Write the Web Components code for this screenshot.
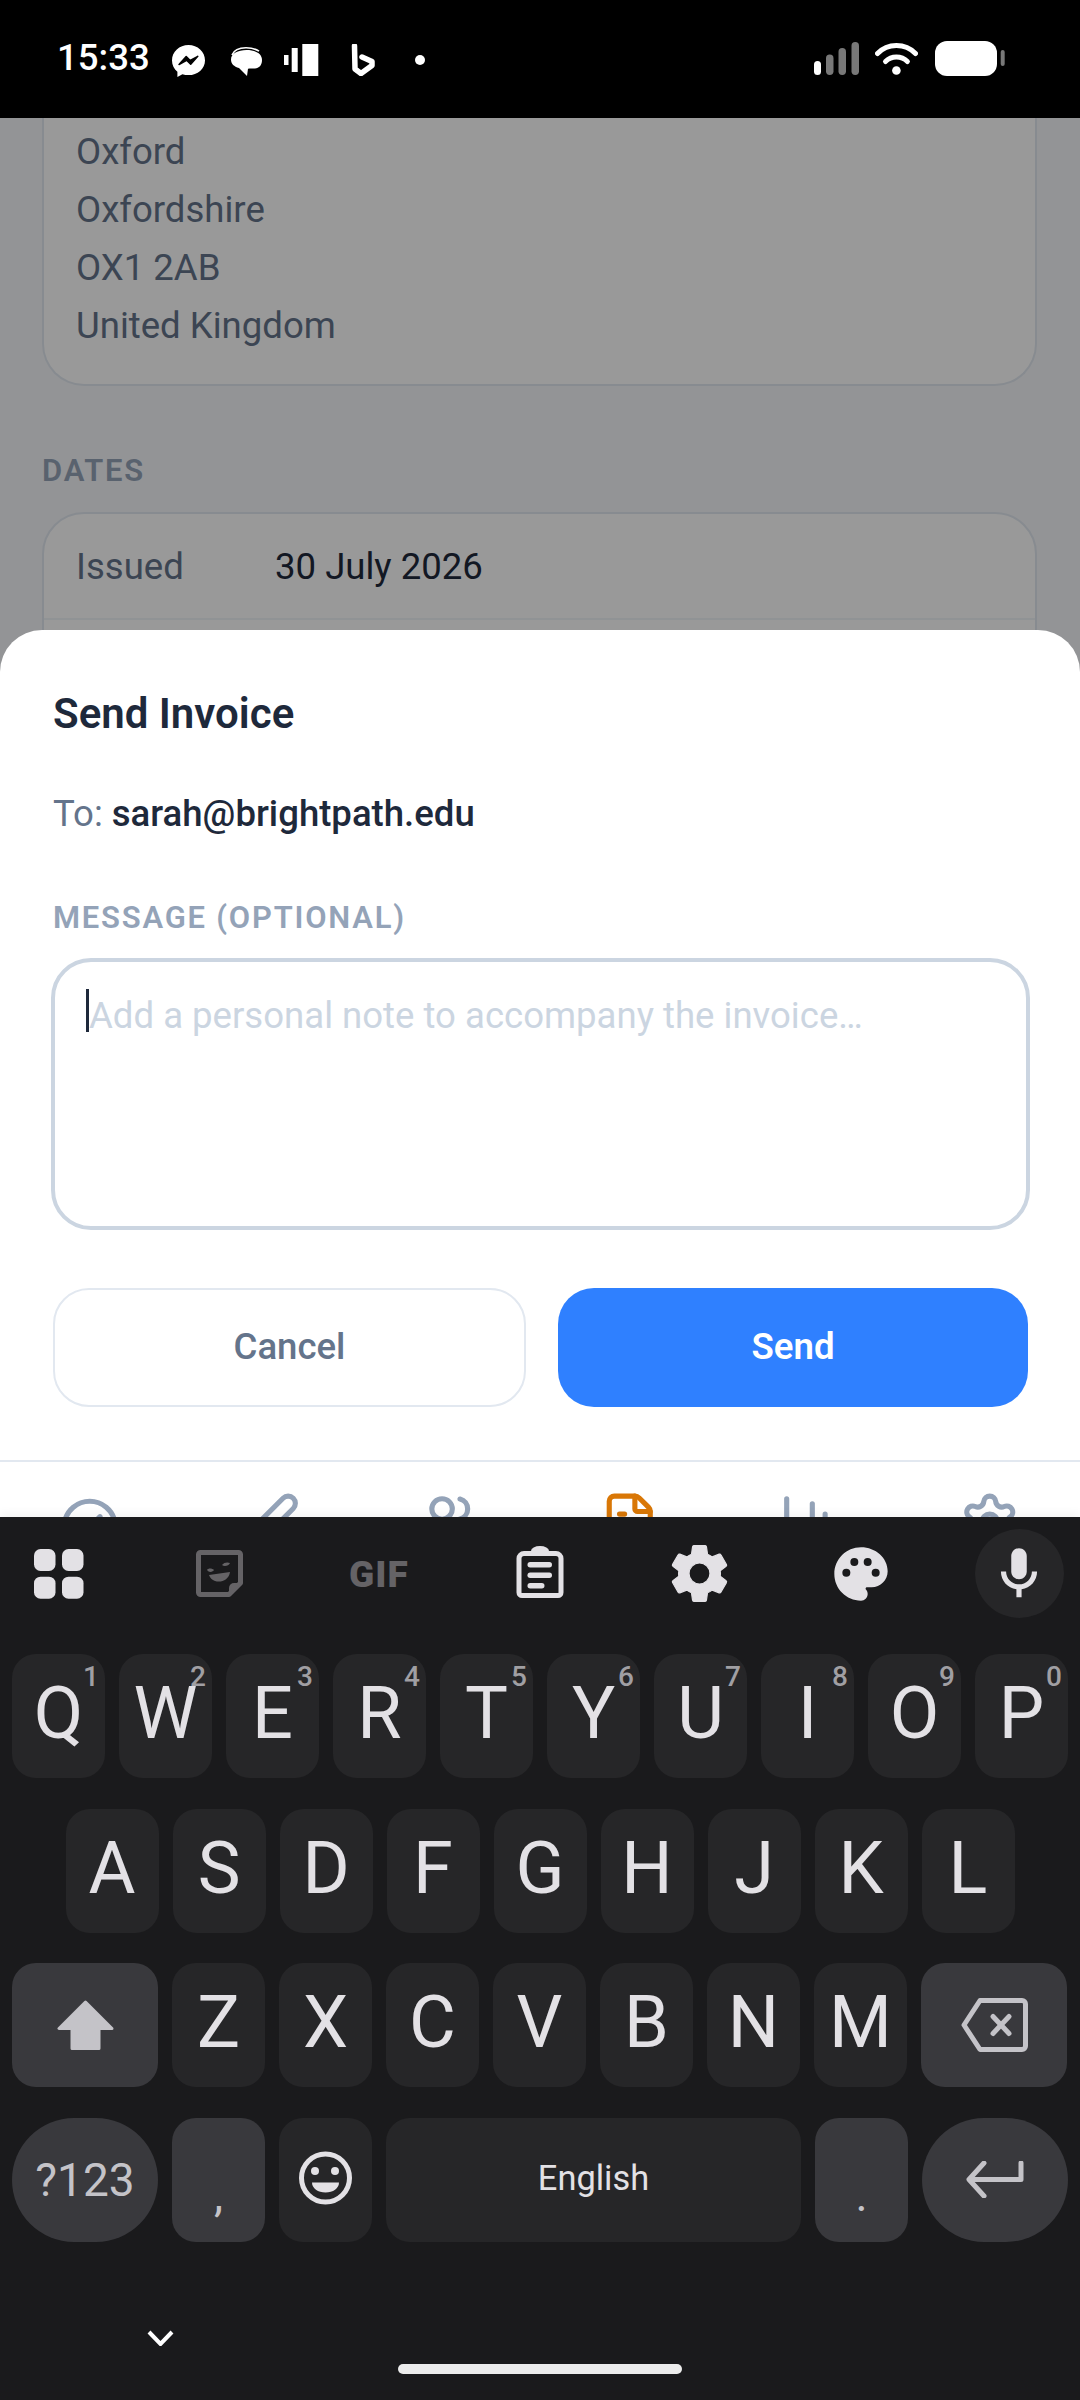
<!DOCTYPE html>
<html lang="en"><head><meta charset="utf-8"><title>Send Invoice</title>
<style>
html,body{margin:0;padding:0;background:#000}
body{width:1080px;height:2400px;overflow:hidden;font-family:Roboto,"Liberation Sans",sans-serif}
phone-app{width:1080px;height:2400px}
</style></head><body>
<phone-app></phone-app>

<template id="t-status-bar"><style>
:host{display:flex;height:118px;background:#000;color:#fff;box-sizing:border-box;position:relative;flex:none;padding:0 75px 0 57px;justify-content:space-between;align-items:flex-start}
.l,.r{display:flex;align-items:flex-start}
.time{font-size:36.560px;font-weight:500;line-height:42px;margin-top:37px;width:91px;white-space:nowrap}
svg{display:block;fill:#fff}
</style>
<div class="l"><span class="time">15:33</span>
<svg style="margin:45px 0 0 24px" width="33" height="32" viewBox="0 0 33 32"><path d="M16.500 0C7.400 0 0 6.800 0 15.400c0 4.600 2 8.600 5.400 11.300V32l5-2.800c1.900.6 4 .9 6.100.9C25.600 30.100 33 23.700 33 15.400 33 6.800 25.600 0 16.500 0z"/><path d="M7 19.500l7.200-8 4 4 7.600-4.200-7.100 8-4.100-4z" fill="#000" stroke="#000" stroke-width="1.500" stroke-linejoin="round"/></svg>
<svg style="margin:47px 0 0 26px" width="31" height="29" viewBox="0 0 31 29"><path d="M1 8C3 3 8 .8 15 .8s10 1.200 13 3.400" fill="none" stroke="#fff" stroke-width="1.600"/><path d="M15.500 3C24 3 31 6.500 31 13c0 5.500-3 8-7 8.500-2 .2-5 0-7 .2L16 29 8 21C3 19.500 0 17 0 12.500 0 6.500 7 3 15.500 3z"/></svg>
<svg style="margin:44px 0 0 22px" width="35" height="32" viewBox="0 0 35 32"><rect x="0" y="11" width="4.500" height="10"/><rect x="7.700" y="4" width="6" height="24"/><rect x="18.300" y="0" width="16" height="32"/></svg>
<svg style="margin:44px 0 0 32px" width="24" height="32" viewBox="0 0 24 32"><path d="M3.500 2L4 25l6 4.500 11-8v-4L11 13" fill="none" stroke="#fff" stroke-width="5.500" stroke-linejoin="round" stroke-linecap="round"/></svg>
<svg style="margin:55px 0 0 40px" width="10" height="10" viewBox="0 0 10 10"><circle cx="5" cy="5" r="5"/></svg>
</div>
<div class="r">
<svg style="margin:42px 0 0 0" width="45" height="34" viewBox="0 0 45 34"><rect x="0" y="19" width="7" height="14" rx="3.500"/><g fill="#787878"><rect x="12" y="12.500" width="7.500" height="20.500" rx="3.700"/><rect x="24.500" y="6" width="7.500" height="27" rx="3.700"/><rect x="37.500" y="0" width="7.500" height="33" rx="3.700"/></g></svg>
<svg style="margin:43px 0 0 16px" width="43" height="32" viewBox="0 0 43 32"><path d="M2.500 10.500C7.500 5.300 14 2.500 21.400 2.500S35.500 5.300 40.500 10.500" fill="none" stroke="#fff" stroke-width="5" stroke-linecap="round"/><path d="M10.500 18.500c3-3 6.800-4.500 10.900-4.500s8 1.500 11 4.500" fill="none" stroke="#fff" stroke-width="5" stroke-linecap="round"/><circle cx="21.400" cy="27.500" r="4.300"/></svg>
<svg style="margin:41px 0 0 17px" width="70" height="35" viewBox="0 0 70 35"><rect x="0" y="0" width="62" height="35" rx="12"/><rect x="65.700" y="9" width="4" height="16" rx="2" fill="#787878"/></svg>
</div></template>

<template id="t-invoice-page"><style>
:host{display:block;background:#f5f7fa;height:100%;padding:0 43px 0 42px;box-sizing:border-box;color:#64748b;font-size:36.560px}
.c{background:#fff;border:2px solid #e2e8f0;border-radius:42px}
.addr{border-top:0;border-top-left-radius:0;border-top-right-radius:0;padding:5px 32px 30px;line-height:58px;height:268px;box-sizing:border-box;margin-left:0}
h3{margin:64.500px 0 21.500px;font-size:30.940px;line-height:40px;font-weight:600;letter-spacing:1.800px;color:#94a3b8}
.row{display:flex;padding:0 32px;height:104px;align-items:center;box-sizing:border-box}
.row span{width:199px}.row b{font-weight:400;color:#1e293b}
.row.e{border-top:2px solid #f1f5f9}
</style>
<div class="c addr">Oxford<br>Oxfordshire<br>OX1 2AB<br>United Kingdom</div>
<h3>DATES</h3>
<div class="c"><div class="row"><span>Issued</span><b>30 July 2026</b></div><div class="row e"></div></div></template>

<template id="t-send-sheet"><style>
:host{display:block;position:absolute;left:0;right:0;bottom:0;background:#fff;border-radius:42px 42px 0 0;padding:60px 52px 53px 53px;box-sizing:border-box;height:830px;color:#1e293b}
h2{margin:0;font-size:42px;line-height:48px;font-weight:600}
.to{margin-top:52px;font-size:36.560px;line-height:48px;color:#64748b}
.to b{font-weight:500;color:#1e293b}
label{display:block;margin-top:60px;font-size:30.940px;line-height:40px;font-weight:600;letter-spacing:1.800px;color:#94a3b8}
.ta{margin:20px -2px 0 -2px;height:272px;box-sizing:border-box;border:4px solid #cbd5e1;border-radius:40px;padding:29px 34px;font-size:36.560px;line-height:48px;color:#cbd5e1;white-space:nowrap}
.cur{display:inline-block;width:3px;height:43px;margin:0 0 -3px -3px;background:#1e293b;vertical-align:-3px;position:relative;top:-2px}
.btns{display:grid;grid-template-columns:473px 470px;column-gap:32px;margin-top:57.500px}
.btn{height:119px;box-sizing:border-box;border-radius:36px;display:flex;align-items:center;justify-content:center;font-size:36.560px;font-weight:500}
.cancel{border:2px solid #e2e8f0;color:#64748b;background:#fff;padding-bottom:2px}
.send{background:#2f80ff;color:#fff;font-weight:600;padding-bottom:1px}
</style>
<h2>Send Invoice</h2>
<div class="to">To: <b>sarah@brightpath.edu</b></div>
<label>MESSAGE (OPTIONAL)</label>
<div class="ta"><span class="cur"></span>Add a personal note to accompany the invoice…</div>
<div class="btns"><div class="btn cancel">Cancel</div><div class="btn send">Send</div></div></template>

<template id="t-tab-bar"><style>
:host{display:grid;grid-template-columns:repeat(6,1fr);height:57px;box-sizing:border-box;background:#fff;border-top:2px solid #e2e8f0;overflow:hidden;flex:none}
div{display:flex;justify-content:center;padding-top:29px}
svg{width:61.500px;height:61.500px;fill:none;stroke:#94a3b8;stroke-width:2;stroke-linecap:round;stroke-linejoin:round;flex:none}
.on svg{stroke:#d97706}
</style>
<div><svg viewBox="0 0 24 24"><path d="m12 14 4-4"/><path d="M3.340 19a10 10 0 1 1 17.320 0"/></svg></div>
<div><svg viewBox="0 0 24 24"><path d="M21.174 6.812a1 1 0 0 0-3.986-3.987L3.842 16.174a2 2 0 0 0-.5.830l-1.321 4.352a.5.5 0 0 0 .623.622l4.353-1.320a2 2 0 0 0 .830-.497z"/></svg></div>
<div><svg viewBox="0 0 24 24"><path d="M16 21v-2a4 4 0 0 0-4-4H6a4 4 0 0 0-4 4v2"/><path d="M16 3.128a4 4 0 0 1 0 7.744"/><path d="M22 21v-2a4 4 0 0 0-3-3.870"/><circle cx="9" cy="7" r="4"/></svg></div>
<div class="on"><svg viewBox="0 0 24 24"><path d="M6 22a2 2 0 0 1-2-2V4a2 2 0 0 1 2-2h8a2.400 2.400 0 0 1 1.706.706l3.588 3.588A2.400 2.400 0 0 1 20 8v12a2 2 0 0 1-2 2z"/><path d="M14 2v5a1 1 0 0 0 1 1h5"/><path d="M10 9H8"/><path d="M16 13H8"/><path d="M16 17H8"/></svg></div>
<div><svg viewBox="0 0 24 24"><path d="M3 3v16a2 2 0 0 0 2 2h16"/><path d="M18 17V9"/><path d="M13 17V5"/><path d="M8 17v-3"/></svg></div>
<div><svg viewBox="0 0 24 24"><path d="M9.671 4.136a2.340 2.340 0 0 1 4.659 0 2.340 2.340 0 0 0 3.319 1.915 2.340 2.340 0 0 1 2.330 4.033 2.340 2.340 0 0 0 0 3.831 2.340 2.340 0 0 1-2.330 4.033 2.340 2.340 0 0 0-3.319 1.915 2.340 2.340 0 0 1-4.659 0 2.340 2.340 0 0 0-3.320-1.915 2.340 2.340 0 0 1-2.330-4.033 2.340 2.340 0 0 0 0-3.831A2.340 2.340 0 0 1 6.350 6.051a2.340 2.340 0 0 0 3.319-1.915"/><circle cx="12" cy="12" r="3"/></svg></div></template>

<template id="t-kb-key"><style>
:host{display:flex;position:relative;flex:0 0 93px;height:124px;box-sizing:border-box;background:#262628;border-radius:24px;align-items:center;justify-content:center;padding-bottom:4px;color:#e3e1e5;font-size:72px;font-weight:370;line-height:1}
:host([fn]){background:#39393d;color:#c4c3c8;padding-bottom:0}
:host([wide]){flex-basis:146px}
:host([pill]){border-radius:62px;flex-basis:146px}
:host([grow]){flex:1}
.h{position:absolute;top:5px;right:6px;font-size:28px;font-weight:500;line-height:36px;color:#a09fa3}
.h:empty{display:none}
</style><slot></slot><span class="h"></span></template>

<template id="t-key-board"><style>
:host{display:block;flex:1;background:#1a1a1c;position:relative;box-shadow:0 -5px 8px rgba(0,0,0,.04)}
.tools{display:flex;height:137px;position:relative;align-items:flex-start}
.tools svg{display:block;flex:none;fill:#e3e1e5}
.gif{flex:none;font-size:37px;font-weight:900;line-height:44px;width:62px;color:#656366;margin:36px 0 0 105px;letter-spacing:1px;white-space:nowrap}
.mic{flex:none;width:89px;height:89px;border-radius:50%;background:#262628;margin:12px 0 0 82px;display:flex;align-items:center;justify-content:center}
.rows{display:flex;flex-direction:column;row-gap:30.670px;padding:0 12px}
.row{display:flex;column-gap:14px;justify-content:center}
.row.s{justify-content:flex-start}
.bar{position:absolute;left:0;right:0;bottom:0;height:70px}
.chev{position:absolute;left:147px;top:0}
.home{position:absolute;left:398px;top:34px;width:284px;height:10px;border-radius:5px;background:#ececec}
</style>
<div class="tools">
<svg style="margin:32px 0 0 34px" width="50" height="50" viewBox="0 0 50 50"><rect width="21.500" height="22" rx="6.500"/><rect x="28" width="21.500" height="22" rx="6.500"/><rect y="27.700" width="21.500" height="22" rx="6.500"/><rect x="28" y="27.700" width="21.500" height="22" rx="6.500"/></svg>
<svg style="margin:33px 0 0 112px;fill:#656366" width="48" height="48" viewBox="0 0 48 48"><path d="M2.500 4.500a2 2 0 0 1 2-2h38a2 2 0 0 1 2 2v28.500L33 44.500H4.500a2 2 0 0 1-2-2z" fill="none" stroke="#656366" stroke-width="5" stroke-linejoin="round"/><path d="M46 33H38a5 5 0 0 0-5 5v8z"/><path d="M11 20c1-2 5-2 7 0-1 2-5 3-7 0zM26 15c2-3 6-3 8-2-1 3-6 4-8 2zM13 25l21-3c-1 8-9 11-15 9-3-1-5-3-6-6z"/></svg>
<span class="gif">GIF</span>
<svg style="margin:29px 0 0 105px" width="48" height="52" viewBox="0 0 48 52"><path d="M8 7.500h32a5 5 0 0 1 5 5v34a3 3 0 0 1-3 3H6a3 3 0 0 1-3-3v-34a5 5 0 0 1 5-5z" fill="none" stroke="#e3e1e5" stroke-width="5"/><path d="M15 5a9 5 0 0 1 18 0v5H15z"/><rect x="11.500" y="16" width="24.500" height="5.500" rx="2.700"/><rect x="11.500" y="26.500" width="24.500" height="5.500" rx="2.700"/><rect x="11.500" y="37" width="17" height="5.500" rx="2.700"/></svg>
<svg style="margin:26px 0 0 104.500px" width="61" height="61" viewBox="1.500 1.500 21 21"><path d="M19.140 12.940c.040-.300.060-.610.060-.940 0-.320-.020-.640-.070-.940l2.030-1.580c.180-.140.230-.410.120-.610l-1.920-3.320c-.120-.220-.370-.290-.590-.220l-2.390.960c-.500-.380-1.030-.700-1.620-.940l-.360-2.540c-.040-.240-.240-.410-.480-.410h-3.840c-.240 0-.430.170-.470.410l-.360 2.540c-.590.240-1.130.570-1.620.940l-2.390-.96c-.220-.080-.470 0-.59.220L2.740 8.870c-.120.210-.080.470.120.61l2.030 1.580c-.050.300-.090.630-.090.940s.020.640.07.940l-2.030 1.580c-.180.140-.230.410-.12.610l1.920 3.320c.120.220.370.290.590.220l2.390-.96c.500.380 1.030.700 1.620.94l.36 2.540c.050.240.240.41.48.41h3.840c.24 0 .44-.17.47-.41l.36-2.54c.59-.24 1.13-.56 1.62-.94l2.39.96c.22.08.47 0 .59-.22l1.92-3.32c.12-.22.07-.47-.12-.61l-2.010-1.58zM12 15.600c-1.980 0-3.600-1.620-3.600-3.600s1.620-3.600 3.600-3.600 3.600 1.620 3.600 3.600-1.620 3.600-3.600 3.600z" stroke="#e3e1e5" stroke-width=".4" stroke-linejoin="round"/></svg>
<svg style="margin:25px 0 0 99px" width="64" height="64" viewBox="0 0 24 24"><path d="M12 2C6.490 2 2 6.490 2 12s4.490 10 10 10c1.380 0 2.500-1.120 2.500-2.500 0-.610-.230-1.200-.640-1.670-.080-.100-.130-.210-.130-.330 0-.280.220-.500.500-.500H16c3.310 0 6-2.690 6-6 0-4.960-4.490-9-10-9z"/><g fill="#1a1a1c"><circle cx="6.500" cy="11.500" r="1.500"/><circle cx="9.500" cy="7.500" r="1.500"/><circle cx="14.500" cy="7.500" r="1.500"/><circle cx="17.500" cy="11.500" r="1.500"/></g></svg>
<div class="mic"><svg width="62" height="62" viewBox="0 0 24 24"><path d="M12 14c1.660 0 3-1.340 3-3V5c0-1.660-1.340-3-3-3S9 3.340 9 5v6c0 1.660 1.340 3 3 3z"/><path d="M17 11c0 2.760-2.240 5-5 5s-5-2.240-5-5H5c0 3.530 2.610 6.430 6 6.920V21h2v-3.080c3.390-.490 6-3.390 6-6.920h-2z"/></svg></div>
</div>
<div class="rows">
<div class="row"><kb-key hint="1">Q</kb-key><kb-key hint="2">W</kb-key><kb-key hint="3">E</kb-key><kb-key hint="4">R</kb-key><kb-key hint="5">T</kb-key><kb-key hint="6">Y</kb-key><kb-key hint="7">U</kb-key><kb-key hint="8">I</kb-key><kb-key hint="9">O</kb-key><kb-key hint="0">P</kb-key></div>
<div class="row"><kb-key>A</kb-key><kb-key>S</kb-key><kb-key>D</kb-key><kb-key>F</kb-key><kb-key>G</kb-key><kb-key>H</kb-key><kb-key>J</kb-key><kb-key>K</kb-key><kb-key>L</kb-key></div>
<div class="row s"><kb-key fn wide><svg width="57" height="52" viewBox="0 0 57 52"><path d="M28.500 3L2 29.500h13V49.500h27V29.500h13z" fill="#c4c3c8" stroke="#c4c3c8" stroke-width="3" stroke-linejoin="round"/></svg></kb-key><kb-key>Z</kb-key><kb-key>X</kb-key><kb-key>C</kb-key><kb-key>V</kb-key><kb-key>B</kb-key><kb-key>N</kb-key><kb-key>M</kb-key><kb-key fn wide><svg width="67" height="54" viewBox="0 0 67 54"><path d="M3 27L19 2.500h42a3.500 3.500 0 0 1 3.500 3.500v42a3.500 3.500 0 0 1-3.500 3.500H19z" fill="none" stroke="#c4c3c8" stroke-width="5" stroke-linejoin="round"/><path d="M32 18.500l16 17M48 18.500l-16 17" fill="none" stroke="#c4c3c8" stroke-width="5" stroke-linecap="round"/></svg></kb-key></div>
<div class="row"><kb-key fn pill class="sm">?123</kb-key><kb-key fn class="low">,</kb-key><kb-key><svg width="53" height="54" viewBox="0 0 53 54"><circle cx="26.500" cy="27" r="24" fill="none" stroke="#e3e1e5" stroke-width="5"/><circle cx="16" cy="20" r="4" fill="#e3e1e5"/><circle cx="36" cy="20" r="4" fill="#e3e1e5"/><path d="M13 31.500h27c0 6-6 10-13.500 10S13 37.500 13 31.500z" fill="#e3e1e5"/></svg></kb-key><kb-key grow class="en">English</kb-key><kb-key fn class="low">.</kb-key><kb-key fn pill><svg width="58" height="37" viewBox="0 0 58 37"><path d="M55 2v16.500H4M18 2L3 18.500 18 35" fill="none" stroke="#c4c3c8" stroke-width="5" stroke-linecap="round" stroke-linejoin="round"/></svg></kb-key></div>
</div>
<div class="bar"><svg class="chev" width="27" height="16" viewBox="0 0 27 16"><path d="M2 2l11.500 12L25 2" fill="none" stroke="#fff" stroke-width="4"/></svg><div class="home"></div></div></template>

<template id="t-phone-app"><style>
:host{display:flex;flex-direction:column;width:1080px;height:2400px;overflow:hidden}
.stage{height:1399px;flex:none;display:flex;flex-direction:column;overflow:hidden}
.area{flex:1;min-height:0;position:relative;overflow:hidden}
.scrim{position:absolute;inset:0;background:rgba(0,0,0,.4)}
</style>
<status-bar></status-bar>
<div class="stage"><div class="area"><invoice-page></invoice-page><div class="scrim"></div><send-sheet></send-sheet></div><tab-bar></tab-bar></div>
<key-board></key-board></template>

<script>
const mk=(n,extra)=>customElements.define(n,class extends HTMLElement{
  constructor(){super();this.attachShadow({mode:"open"}).appendChild(document.getElementById("t-"+n).content.cloneNode(true));}
  connectedCallback(){if(extra)extra(this);}
});
mk("kb-key",el=>{el.shadowRoot.querySelector(".h").textContent=el.getAttribute("hint")||"";
  if(el.classList.contains("sm")){el.style.fontSize="46px"}
  if(el.classList.contains("en")){el.style.fontSize="34.400px";el.style.color="#e3e1e5"}
  if(el.classList.contains("low")){el.style.fontSize="46px";el.style.alignItems="flex-end";el.style.paddingBottom="24px"}
});
["status-bar","invoice-page","send-sheet","tab-bar","key-board","phone-app"].forEach(n=>mk(n));
</script>
</body></html>
